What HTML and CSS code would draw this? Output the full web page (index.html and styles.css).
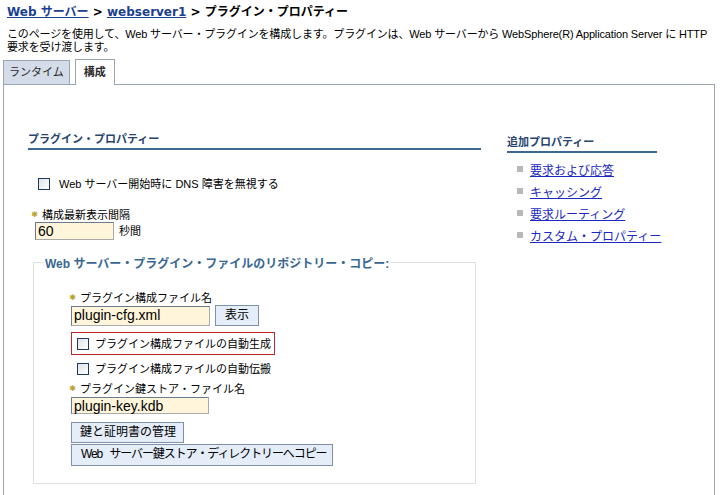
FILE: index.html
```html
<!DOCTYPE html>
<html lang="ja">
<head>
<meta charset="utf-8">
<link rel="stylesheet" href="styles.css">
</head>
<body>
<div class="crumb"><a href="#">Web サーバー</a> &gt; <a href="#">webserver1</a> &gt; プラグイン・プロパティー</div>
<div class="desc">このページを使用して、Web サーバー・プラグインを構成します。プラグインは、Web サーバーから WebSphere(R) Application Server に HTTP<br>要求を受け渡します。</div>
<div class="tabs">
  <div class="tab">ランタイム</div>
  <div class="tab active">構成</div>
</div>
<div class="panel">
  <div class="main">
    <div class="heading">プラグイン・プロパティー</div>
    <label class="check first"><span class="box"></span>Web サーバー開始時に DNS 障害を無視する</label>
    <div class="label ind1"><span class="req">✱</span>構成最新表示間隔</div>
    <div class="row ind1"><div class="input w60">60</div><span class="unit">秒間</span></div>
    <fieldset class="repo">
      <legend>Web サーバー・プラグイン・ファイルのリポジトリー・コピー:</legend>
      <div class="repo-body">
        <div class="label"><span class="req">✱</span>プラグイン構成ファイル名</div>
        <div class="row"><div class="input wcfg">plugin-cfg.xml</div><div class="btn">表示</div></div>
        <label class="check boxed"><span class="box"></span>プラグイン構成ファイルの自動生成</label>
        <label class="check plain"><span class="box"></span>プラグイン構成ファイルの自動伝搬</label>
        <div class="label keylabel"><span class="req">✱</span>プラグイン鍵ストア・ファイル名</div>
        <div class="input wkey">plugin-key.kdb</div>
        <div class="btn b1">鍵と証明書の管理</div>
        <div class="btn b2">Web サーバー鍵ストア・ディレクトリーへコピー</div>
      </div>
    </fieldset>
  </div>
  <div class="side">
    <div class="heading side-h">追加プロパティー</div>
    <ul class="links">
      <li><a href="#">要求および応答</a></li>
      <li><a href="#">キャッシング</a></li>
      <li><a href="#">要求ルーティング</a></li>
      <li><a href="#">カスタム・プロパティー</a></li>
    </ul>
  </div>
</div>
</body>
</html>
```
FILE: styles.css
```css
* { box-sizing: border-box; }
html, body { margin: 0; padding: 0; background: #fff; overflow: hidden; }
body {
  font-family: "Liberation Sans", "Noto Sans CJK JP", sans-serif;
  font-size: 11px;
  color: #000;
  width: 724px;
  height: 495px;
  white-space: nowrap;
}
.crumb {
  padding: 4px 7px 0;
  height: 28px;
  font-family: "DejaVu Sans", "Noto Sans CJK JP", sans-serif;
  font-size: 12px;
  font-weight: bold;
  line-height: 16px;
}
.crumb a { color: #1b3f8f; text-decoration: underline; }
.desc {
  padding: 0 7px;
  line-height: 13px;
  height: 30px;
  font-size: 11px;
  letter-spacing: -0.15px;
}
.tabs { display: flex; align-items: flex-end; padding-left: 3px; gap: 5px; height: 26px; }
.tab {
  height: 24px;
  padding: 0 5px;
  line-height: 22px;
  border: 1px solid #9aa6b6;
  border-bottom: none;
  background: #d4dcea;
  color: #2a2a2a;
}
.tab.active {
  background: #fff;
  height: 26px;
  padding: 0 8px;
  margin-bottom: -1px;
  position: relative;
  line-height: 24px;
  font-weight: bold;
}
.panel {
  margin: 0 9px 0 3px;
  border: 1px solid #9aa6b6;
  border-bottom: none;
  height: 420px;
  display: flex;
}
.main { width: 477px; padding: 47px 0 0 24px; }
.side { padding: 50px 0 0 26px; }
.heading {
  color: #27466f;
  font-weight: bold;
  font-size: 11px;
  line-height: 14px;
  padding-bottom: 2px;
  border-bottom: 2px solid #3d6892;
}
.side-h { width: 150px; }
.check { display: flex; align-items: center; gap: 9px; line-height: 14px; }
.box {
  width: 12px; height: 12px;
  border: 1px solid #1f3a5e;
  background: linear-gradient(135deg, #dfe3e8, #fff);
  flex: none;
}
.check.first { margin: 27px 0 0 10px; }
.label { display: flex; align-items: center; gap: 3px; line-height: 14px; }
.req {
  color: #b8a02a;
  font-family: "DejaVu Sans", sans-serif;
  font-size: 8px;
  width: 9px;
  text-align: center;
}
.ind1 { margin-left: 2px; }
.main > .label { margin-top: 17px; }
.row { display: flex; align-items: center; gap: 5px; }
.input {
  height: 18px;
  background: #fff5da;
  border: 1px solid #a9a9a9;
  border-top-color: #6b7c8f;
  border-left-color: #6b7c8f;
  font-size: 14px;
  line-height: 16px;
  padding-left: 2px;
}
.w60 { width: 79px; margin-left: 5px; }
.unit { line-height: 14px; }
.repo {
  margin: 14px 0 0 5px;
  width: 443px;
  height: 230px;
  border: 1px solid #e0e0e0;
  padding: 0;
}
.repo legend {
  color: #386892;
  font-weight: bold;
  font-size: 12px;
  padding: 0 2px;
  margin-left: 9px;
}
.repo-body { padding: 20px 0 0 34px; }
.wcfg { width: 139px; height: 20px; }
.btn {
  background: #e4edf8;
  border: 1px solid #7f90a8;
  height: 21px;
  line-height: 19px;
  padding: 0 9px;
  font-size: 12px;
  display: inline-block;
}
.repo .row { margin-top: 0; margin-left: 3px; }
.boxed {
  margin: 6px 0 0 3px;
  width: 204px;
  height: 23px;
  border: 1px solid #c2262d;
  padding-left: 5px;
  gap: 6px;
}
.plain { margin-top: 7px; padding-left: 9px; height: 13px; gap: 6px; }
.keylabel { margin-top: 7px; }
.wkey { width: 138px; height: 17px; margin: 1px 0 0 3px; }
.b1 { display: block; width: 113px; margin: 8px 0 0 3px; padding: 0 8px; }
.b2 {
  display: block;
  width: 262px;
  margin: 1px 0 0 3px;
  height: 22px;
  padding: 0 9px;
  letter-spacing: -1.1px;
  word-spacing: 5px;
}
.links { list-style: none; margin: 5px 0 0; padding: 0 0 0 10px; }
.links li { display: flex; align-items: center; height: 22px; }
.links li::before {
  content: "";
  width: 6px; height: 6px;
  background: #b8b8b8;
  margin-right: 7px;
}
.links a { color: #1b28c2; text-decoration: underline; font-size: 12px; }
```
